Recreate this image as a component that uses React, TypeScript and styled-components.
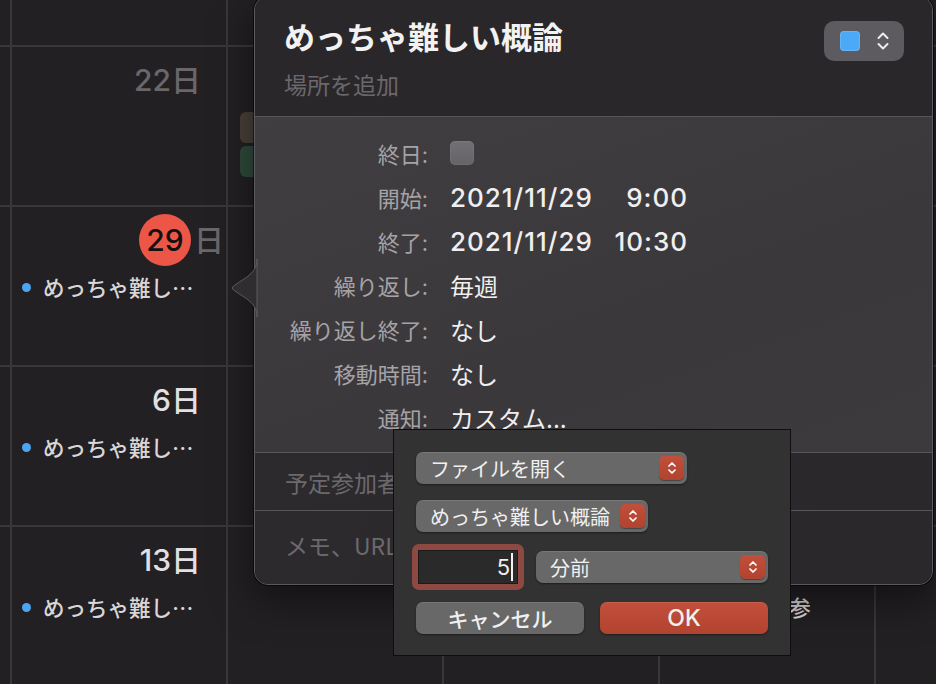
import React from "react";
import styled, { createGlobalStyle } from "styled-components";

const GlobalStyle = createGlobalStyle`
  html, body { margin: 0; padding: 0; background: #232023; }
  body {
    font-family: Inter, "Noto Sans CJK JP", sans-serif;
    -webkit-font-smoothing: antialiased;
  }
  * { box-sizing: border-box; }
`;

const LINE = "#3a373a";

const Page = styled.div`
  position: relative;
  width: 936px;
  height: 684px;
  overflow: hidden;
  background: #232023;
`;

const Grid = styled.div`
  display: grid;
  grid-template-columns: 10px repeat(5, 216px);
  grid-template-rows: 45px repeat(4, 160px);
`;

const Cell = styled.div<{ $first?: boolean; $top?: boolean }>`
  border-left: ${(p) => (p.$first ? "none" : `2px solid ${LINE}`)};
  border-top: ${(p) => (p.$top ? "none" : `2px solid ${LINE}`)};
  display: flex;
  flex-direction: column;
  padding-top: 8px;
  min-width: 0;
  overflow: hidden;
`;

const DateRow = styled.div<{ $today?: boolean }>`
  height: 50px;
  display: flex;
  justify-content: flex-end;
  align-items: center;
  padding-right: ${(p) => (p.$today ? "2px" : "25px")};
  font-size: 30px;
  font-weight: 500;
  line-height: 1;
`;

const DateText = styled.span<{ $dim?: boolean }>`
  color: ${(p) => (p.$dim ? "#6a676a" : "#e2e0e2")};
`;

const TodayCircle = styled.span`
  width: 52px;
  height: 52px;
  border-radius: 50%;
  background: #ec5646;
  color: #111;
  display: flex;
  align-items: center;
  justify-content: center;
`;

const TodaySuffix = styled.span`
  color: #6a676a;
  margin-left: 3px;
`;

const EventRow = styled.div`
  margin-top: 9px;
  height: 26px;
  display: flex;
  align-items: center;
  gap: 12px;
  padding-left: 10px;
`;

const Dot = styled.span`
  width: 9px;
  height: 9px;
  border-radius: 50%;
  background: #4aa6f2;
  flex-shrink: 0;
`;

const EventTitle = styled.span`
  font-family: "Noto Sans CJK JP", sans-serif;
  font-size: 21.5px;
  font-weight: 500;
  line-height: 26px;
  color: #d8d6d8;
  white-space: nowrap;
`;

const Block = styled.div<{ $color: string; $top: number }>`
  margin: ${(p) => p.$top}px 0 0 12px;
  height: 31px;
  border-radius: 6px;
  background: ${(p) => p.$color};
`;

/* ---------- Popover ---------- */

const Popover = styled.section`
  position: absolute;
  left: 254px;
  top: -4px;
  width: 679px;
  height: 589px;
  border-radius: 14px;
  border: 1px solid #5c5a5e;
  box-shadow: 0 0 0 1px rgba(0, 0, 0, 0.55), 0 14px 40px rgba(0, 0, 0, 0.5);
  overflow: hidden;
  display: flex;
  flex-direction: column;
  background: #2c292d;
`;

const Arrow = styled.svg`
  position: absolute;
  left: 230px;
  top: 259px;
  width: 28px;
  height: 58px;
  overflow: visible;
`;

const Header = styled.header`
  height: 120px;
  flex-shrink: 0;
  padding: 19px 28px 0 29px;
  background: #2a272b;
  border-bottom: 1px solid #57555a;
`;

const TitleRow = styled.div`
  display: flex;
  justify-content: space-between;
  align-items: flex-start;
`;

const Title = styled.h1`
  margin: 0;
  font-family: "Noto Sans CJK JP", sans-serif;
  font-size: 31px;
  font-weight: 700;
  line-height: 40px;
  color: #f2f2f2;
`;

const SwatchButton = styled.div`
  margin-top: 5px;
  width: 80px;
  height: 40px;
  border-radius: 10px;
  background: #5d5b5f;
  display: flex;
  align-items: center;
  padding-left: 16px;
  gap: 17px;
`;

const Swatch = styled.span`
  width: 20px;
  height: 20px;
  border-radius: 4px;
  background: #4ba9f5;
  box-shadow: inset 0 0 0 1px rgba(255, 255, 255, 0.15);
`;

const Subtitle = styled.div`
  margin-top: 8px;
  font-family: "Noto Sans CJK JP", sans-serif;
  font-size: 23px;
  line-height: 30px;
  color: #6b686c;
`;

const Body = styled.div`
  height: 335px;
  flex-shrink: 0;
  background: linear-gradient(160deg, #413e42 0%, #3b383c 60%, #3d3a3e 100%);
  padding: 14px 0 13px;
  display: grid;
  grid-template-columns: 173px 1fr;
  column-gap: 22px;
  grid-auto-rows: 44px;
  align-items: center;
`;

const Label = styled.div`
  text-align: right;
  font-size: 22px;
  color: #a6a3a7;
  white-space: nowrap;
`;

const Value = styled.div`
  display: flex;
  align-items: center;
  font-size: 24px;
  color: #f0eff0;
  white-space: nowrap;
`;

const DatePart = styled.span`
  width: 143px;
  font-size: 26px;
  font-weight: 500;
  letter-spacing: 1px;
`;

const TimePart = styled.span`
  width: 95px;
  text-align: right;
  font-size: 26px;
  font-weight: 500;
  letter-spacing: 1px;
`;

const Checkbox = styled.span`
  width: 24px;
  height: 24px;
  border-radius: 5px;
  background: linear-gradient(#727074, #656367);
  box-shadow: inset 0 0 0 1px rgba(255, 255, 255, 0.06);
`;

const Section = styled.div<{ $grow?: boolean }>`
  border-top: 1px solid #58565a;
  padding-left: 30px;
  font-family: "Noto Sans CJK JP", sans-serif;
  font-size: 23px;
  line-height: 30px;
  color: #6c696d;
  display: flex;
  align-items: ${(p) => (p.$grow ? "flex-start" : "center")};
  height: ${(p) => (p.$grow ? "auto" : "58px")};
  flex: ${(p) => (p.$grow ? "1" : "none")};
  padding-top: ${(p) => (p.$grow ? "19px" : "0")};
  background: linear-gradient(100deg, #2d2a2e, #2b282c);
`;

/* ---------- Dialog ---------- */

const Dialog = styled.div`
  position: absolute;
  left: 393px;
  top: 429px;
  width: 398px;
  height: 227px;
  background: #323232;
  border: 1px solid #0e0e0e;
  padding: 22px 22px 0 22px;
  display: flex;
  flex-direction: column;
  align-items: flex-start;
`;

const PopupButton = styled.div<{ $width: number; $mt?: number }>`
  width: ${(p) => p.$width}px;
  margin-top: ${(p) => p.$mt ?? 0}px;
  height: 32px;
  border-radius: 7px;
  background: #686868;
  box-shadow: inset 0 1px 0 rgba(255, 255, 255, 0.1), 0 1px 2px rgba(0, 0, 0, 0.45);
  display: flex;
  align-items: center;
  justify-content: space-between;
  padding: 0 3px 0 14px;
  font-family: Inter, "Noto Sans CJK JP", sans-serif;
  font-size: 20px;
  color: #f0f0f0;
  white-space: nowrap;
`;

const Stepper = styled.span`
  width: 25px;
  height: 24px;
  border-radius: 5px;
  background: linear-gradient(#c04f3b, #b0432f);
  box-shadow: 0 1px 1px rgba(0, 0, 0, 0.35);
  display: flex;
  align-items: center;
  justify-content: center;
`;

const FieldRow = styled.div`
  margin-top: 12px;
  margin-left: -4px;
  height: 46px;
  display: flex;
  align-items: center;
  gap: 12px;
`;

const FocusRing = styled.div`
  width: 112px;
  height: 46px;
  border-radius: 7px;
  background: #8e4a42;
  padding: 6px;
`;

const Field = styled.div`
  width: 100%;
  height: 100%;
  background: #2a2a2a;
  border: 1px solid #1b1b1b;
  display: flex;
  align-items: center;
  justify-content: flex-end;
  padding-right: 4px;
  font-size: 22px;
  color: #efefef;
`;

const Caret = styled.span`
  width: 2px;
  height: 28px;
  background: #f2f2f2;
  margin-left: 1px;
`;

const ButtonRow = styled.div`
  margin-top: 12px;
  display: flex;
  gap: 16px;
`;

const Button = styled.div<{ $primary?: boolean }>`
  width: 168px;
  height: 32px;
  border-radius: 7px;
  background: ${(p) => (p.$primary ? "linear-gradient(#c24f3b, #b2432f)" : "#686868")};
  box-shadow: inset 0 1px 0 rgba(255, 255, 255, 0.1), 0 1px 2px rgba(0, 0, 0, 0.45);
  display: flex;
  align-items: center;
  justify-content: center;
  font-family: Inter, "Noto Sans CJK JP", sans-serif;
  font-size: ${(p) => (p.$primary ? "23px" : "21px")};
  font-weight: 500;
  color: #f0f0f0;
`;

/* ---------- Icons ---------- */

const UpDown = () => (
  <svg width={12} height={20} viewBox="0 0 12 20" fill="none">
    <path d="M1.5 7 L6 2.5 L10.5 7" stroke="#ececec" strokeWidth={2} strokeLinecap="round" strokeLinejoin="round" />
    <path d="M1.5 13 L6 17.5 L10.5 13" stroke="#ececec" strokeWidth={2} strokeLinecap="round" strokeLinejoin="round" />
  </svg>
);

const StepIcon = () => (
  <Stepper>
    <svg width="10" height="14" viewBox="0 0 10 14" fill="none">
      <path d="M2 5 L5 2 L8 5" stroke="#fff" strokeWidth="1.7" strokeLinecap="round" strokeLinejoin="round" />
      <path d="M2 9 L5 12 L8 9" stroke="#fff" strokeWidth="1.7" strokeLinecap="round" strokeLinejoin="round" />
    </svg>
  </Stepper>
);

/* ---------- Data ---------- */

type CellData = {
  date?: string;
  dim?: boolean;
  today?: string;
  events?: string[];
  blocks?: { color: string; top: number }[];
};

const EV = "めっちゃ難し…";

const rows: CellData[][] = [
  [{}, {}, {}, {}, {}, {}],
  [{}, { date: "22日", dim: true }, { blocks: [{ color: "#4a4137", top: 7 }, { color: "#2e4b3b", top: 3 }] }, {}, {}, {}],
  [{}, { today: "29", events: [EV] }, {}, {}, {}, {}],
  [{}, { date: "6日", events: [EV] }, {}, {}, {}, {}],
  [{}, { date: "13日", events: [EV] }, {}, {}, { events: ["4限の授業参"] }, {}],
];

const details: { label: string; value: React.ReactNode }[] = [
  { label: "終日:", value: <Checkbox /> },
  { label: "開始:", value: (<><DatePart>2021/11/29</DatePart><TimePart>9:00</TimePart></>) },
  { label: "終了:", value: (<><DatePart>2021/11/29</DatePart><TimePart>10:30</TimePart></>) },
  { label: "繰り返し:", value: "毎週" },
  { label: "繰り返し終了:", value: "なし" },
  { label: "移動時間:", value: "なし" },
  { label: "通知:", value: "カスタム..." },
];

export default function App() {
  return (
    <Page>
      <GlobalStyle />
      <Grid>
        {rows.map((row, ri) =>
          row.map((c, ci) => (
            <Cell key={`${ri}-${ci}`} $first={ci === 0} $top={ri === 0}>
              {ri > 0 && ci > 0 && (
                <DateRow $today={!!c.today}>
                  {c.today ? (
                    <>
                      <TodayCircle>{c.today}</TodayCircle>
                      <TodaySuffix>日</TodaySuffix>
                    </>
                  ) : (
                    c.date && <DateText $dim={c.dim}>{c.date}</DateText>
                  )}
                </DateRow>
              )}
              {c.blocks?.map((b, i) => (
                <Block key={i} $color={b.color} $top={b.top} />
              ))}
              {c.events?.map((e, i) => (
                <EventRow key={i}>
                  <Dot />
                  <EventTitle>{e}</EventTitle>
                </EventRow>
              ))}
            </Cell>
          ))
        )}
      </Grid>

      <Popover>
        <Header>
          <TitleRow>
            <Title>めっちゃ難しい概論</Title>
            <SwatchButton>
              <Swatch />
              <UpDown />
            </SwatchButton>
          </TitleRow>
          <Subtitle>場所を追加</Subtitle>
        </Header>
        <Body>
          {details.map((d) => (
            <React.Fragment key={d.label}>
              <Label>{d.label}</Label>
              <Value>{d.value}</Value>
            </React.Fragment>
          ))}
        </Body>
        <Section>予定参加者</Section>
        <Section $grow>メモ、URL</Section>
      </Popover>

      <Arrow viewBox="0 0 28 58">
        <path
          d="M27 0 C27 9 23 13 17 18 L3.5 27 Q0.5 29 3.5 31 L17 40 C23 45 27 49 27 58 Z"
          fill="#302d31"
          stroke="#5c5a5e"
          strokeWidth="1"
        />
      </Arrow>

      <Dialog>
        <PopupButton $width={271}>
          ファイルを開く
          <StepIcon />
        </PopupButton>
        <PopupButton $width={232} $mt={16}>
          めっちゃ難しい概論
          <StepIcon />
        </PopupButton>
        <FieldRow>
          <FocusRing>
            <Field>
              5<Caret />
            </Field>
          </FocusRing>
          <PopupButton $width={232}>
            分前
            <StepIcon />
          </PopupButton>
        </FieldRow>
        <ButtonRow>
          <Button>キャンセル</Button>
          <Button $primary>OK</Button>
        </ButtonRow>
      </Dialog>
    </Page>
  );
}
